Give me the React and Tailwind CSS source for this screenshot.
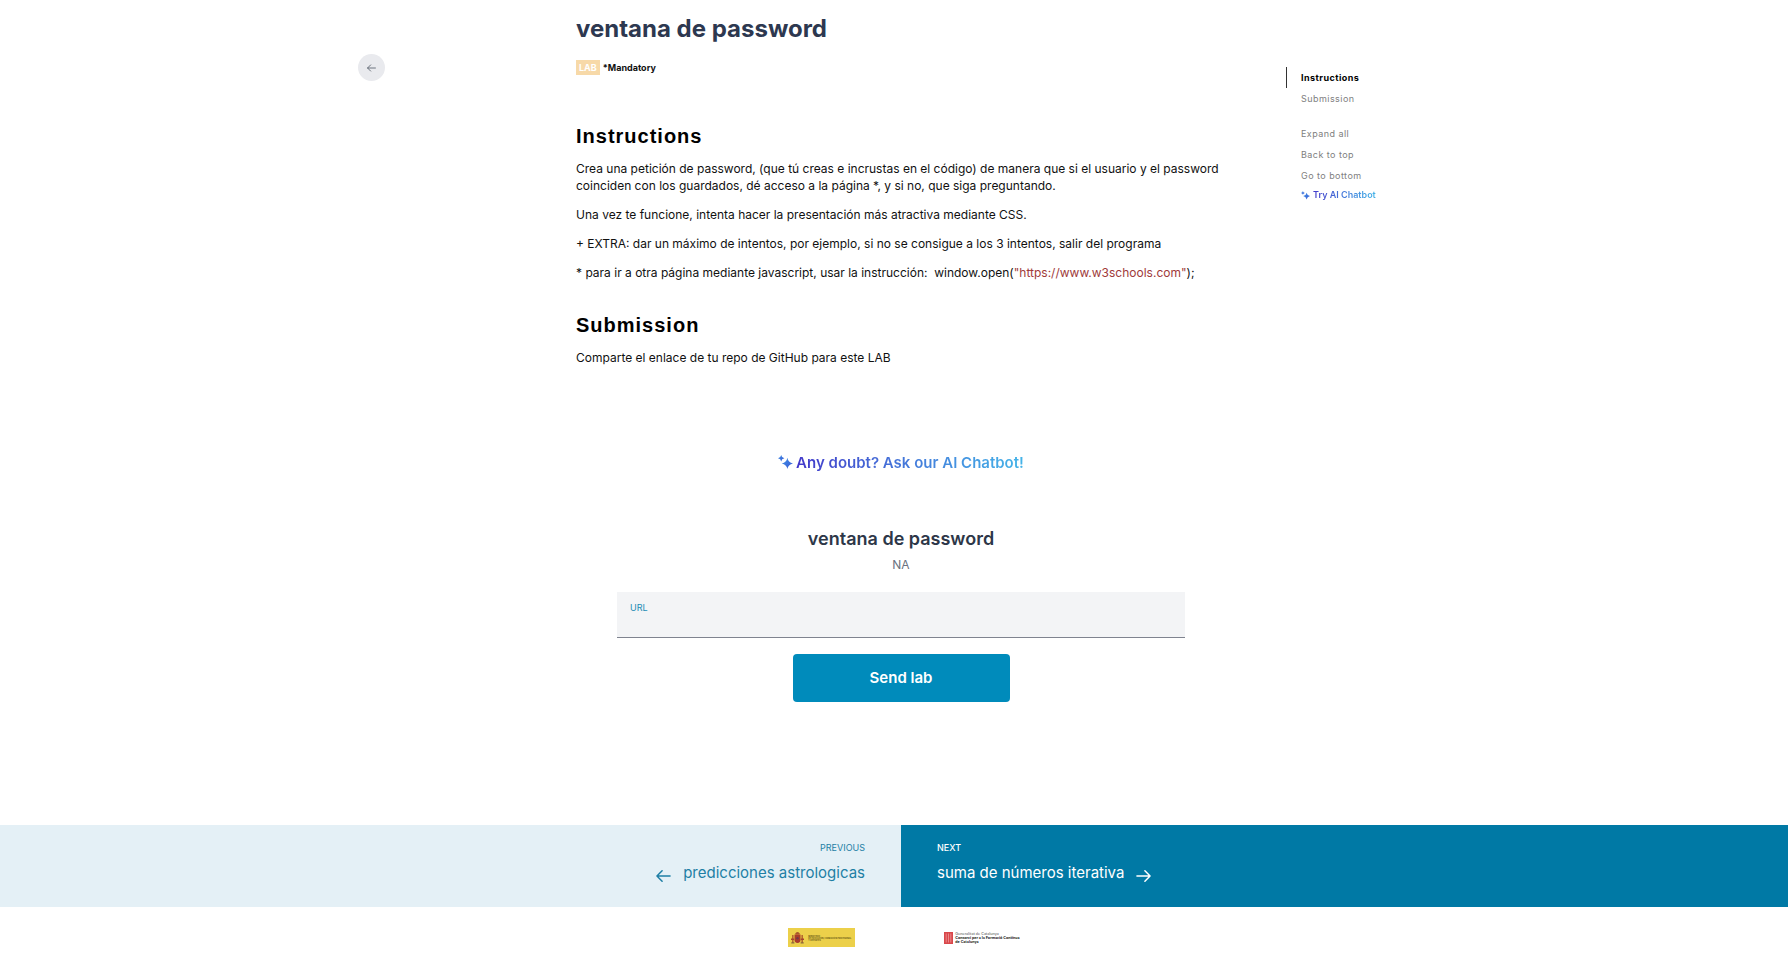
import React from "react";

function Sparkles({ className, id }) {
  return (
    <svg viewBox="0 0 16 16" className={className} aria-hidden="true">
      <defs>
        <linearGradient id={id} x1="0" y1="0" x2="1" y2="1">
          <stop offset="0" stopColor="#3f93e6" />
          <stop offset="1" stopColor="#3a56d4" />
        </linearGradient>
      </defs>
      <g fill={`url(#${id})`}>
        <path d="M10 3 Q10.8 8 16 9 Q10.8 10 10 15 Q9.2 10 4 9 Q9.2 8 10 3Z" />
        <path d="M3.4 0 Q3.8 2.8 6.8 3.4 Q3.8 4 3.4 6.8 Q3 4 0 3.4 Q3 2.8 3.4 0Z" />
      </g>
    </svg>
  );
}

function Arrow({ className, right }) {
  return (
    <svg viewBox="0 0 16 14" className={className} fill="none" stroke="currentColor" strokeWidth="1.6" strokeLinecap="round" strokeLinejoin="round" aria-hidden="true">
      {right ? <path d="M1 7H15M9.5 1.5L15 7L9.5 12.5" /> : <path d="M15 7H1M6.5 1.5L1 7L6.5 12.5" />}
    </svg>
  );
}

function SpainLogo() {
  return (
    <div className="flex h-[19px] w-[67px] items-center gap-1 bg-[#ecd04a] pl-[3px]">
      <svg viewBox="0 0 13 13" className="size-[13px] shrink-0" aria-hidden="true">
        <path d="M4.5 2.2Q6.5-.4 8.5 2.2V3.5H4.5Z" fill="#a8552c" />
        <path d="M3.5 3.5H9.5V9Q9.5 11.5 6.5 12Q3.5 11.5 3.5 9Z" fill="#a93a2b" />
        <path d="M1 4H2.6V12H1ZM10.4 4H12V12H10.4Z" fill="#b5692f" />
        <path d="M0 7.5H3.2V9H0ZM9.8 7.5H13V9H9.8Z" fill="#a5432d" />
        <path d="M.3 11.3H3.4V12.4H.3ZM9.6 11.3H12.7V12.4H9.6Z" fill="#8a6a3c" />
        <circle cx="6.5" cy="7.3" r="1.2" fill="#6f3a48" />
      </svg>
      <p className="whitespace-nowrap text-[2px] font-semibold leading-[2px] text-[#5b4d10]">
        MINISTERIO
        <br />
        DE EDUCACIÓN, FORMACIÓN PROFESIONAL
        <br />Y DEPORTES
      </p>
    </div>
  );
}

function CatalunyaLogo() {
  return (
    <div className="flex items-center gap-[2px]">
      <svg viewBox="0 0 9 12" className="h-3 w-[9px] shrink-0" aria-hidden="true">
        <path d="M0 0H9V12H0Z" fill="#d9474b" />
        <path d="M2.2 1.5V10.5M4.5 1.5V10.5M6.8 1.5V10.5" stroke="#f0a5a5" strokeWidth=".7" />
      </svg>
      <p className="whitespace-nowrap font-['Lato',sans-serif] text-[4px] font-black leading-[4px] text-[#222]">
        <span className="font-normal text-[#555]">Generalitat de Catalunya</span>
        <br />
        Consorci per a la Formació Contínua
        <br />
        de Catalunya
      </p>
    </div>
  );
}

const gradientText = "bg-linear-to-r from-[#4338ca] to-[#45b4e8] bg-clip-text text-transparent";

export default function App() {
  return (
    <div className="min-h-screen bg-white font-['Inter',sans-serif] text-[#111]">
      <div className="grid grid-cols-[1fr_minmax(0,650px)_1fr] pl-[14px]">
        <div className="flex justify-end pr-[191px] pt-[54px]">
          <button type="button" aria-label="Back" className="flex size-[27px] items-center justify-center rounded-full bg-[#e9eaee] text-[#5f6672]">
            <Arrow className="h-2 w-[9px]" />
          </button>
        </div>

        <main>
          <h1 className="pt-[11px] text-[24px] font-bold leading-9 text-[#2d3850]">ventana de password</h1>
          <div className="mt-[13px] flex h-[15px] items-center gap-[3px] text-[9px] font-bold">
            <span className="bg-[#f7d9a8] px-[3px] leading-[15px] text-white">LAB</span>
            <span>*Mandatory</span>
          </div>

          <section id="instructions" className="mt-[47px] text-[12px] leading-[17px]">
            <h2 className="font-['Liberation_Sans',sans-serif] text-[20px] font-bold leading-7 tracking-wider text-black">Instructions</h2>
            <div className="mt-[10px] space-y-3">
              <p>
                Crea una petición de password, (que tú creas e incrustas en el código) de manera que si el usuario y el password
                coinciden con los guardados, dé acceso a la página *, y si no, que siga preguntando.
              </p>
              <p>Una vez te funcione, intenta hacer la presentación más atractiva mediante CSS.</p>
              <p>+ EXTRA: dar un máximo de intentos, por ejemplo, si no se consigue a los 3 intentos, salir del programa</p>
              <p>
                * para ir a otra página mediante javascript, usar la instrucción:&nbsp; window.open(
                <span className="text-[#a03a3a]">"https://www.w3schools.com"</span>);
              </p>
            </div>
          </section>

          <section id="submission" className="mt-[30px] text-[12px] leading-[17px]">
            <h2 className="font-['Liberation_Sans',sans-serif] text-[20px] font-bold leading-7 tracking-wider text-black">Submission</h2>
            <p className="mt-[10px]">Comparte el enlace de tu repo de GitHub para este LAB</p>
          </section>

          <div className="mt-[85px] flex justify-center">
            <button type="button" className="flex items-center gap-[3px] text-[15px] font-semibold leading-6">
              <Sparkles className="mb-[2px] size-[15px]" id="spark-main" />
              <span className={gradientText}>Any doubt? Ask our AI Chatbot!</span>
            </button>
          </div>

          <form className="mx-[41px] mt-[50px] flex flex-col items-center" onSubmit={(e) => e.preventDefault()}>
            <h2 className="text-[18px] font-semibold leading-7 text-[#2d3748]">ventana de password</h2>
            <p className="mt-1 text-[12px] leading-4 text-[#6b7280]">NA</p>
            <div className="mt-[19px] flex h-[46px] w-full flex-col border-b border-[#7f838f] bg-[#f3f4f6] px-[13px] pt-2">
              <label htmlFor="lab-url" className="text-[9px] leading-4 text-[#1c8db5]">URL</label>
              <input id="lab-url" type="url" className="h-5 w-full bg-transparent text-[12px] outline-none" />
            </div>
            <button type="submit" className="mt-4 h-12 w-[217px] rounded-[4px] bg-[#008bbb] text-[15px] font-semibold text-white">Send lab</button>
          </form>
        </main>

        <aside className="pl-[60px] pt-[67px] text-[9px] leading-[21px] text-[#808080]">
          <nav className="flex flex-col items-start tracking-wider">
            <a href="#instructions" className="border-l border-[#333] pl-[14px] font-bold text-black">Instructions</a>
            <a href="#submission" className="pl-[15px]">Submission</a>
          </nav>
          <div className="mt-[14px] flex flex-col items-start pl-[15px]">
            <button type="button" className="tracking-wider">Expand all</button>
            <button type="button" className="tracking-wider">Back to top</button>
            <button type="button" className="tracking-wider">Go to bottom</button>
            <button type="button" className="flex items-center gap-[3px] font-semibold leading-[18px]">
              <Sparkles className="size-[9px]" id="spark-side" />
              <span className={gradientText}>Try AI Chatbot</span>
            </button>
          </div>
        </aside>
      </div>

      <nav className="mt-[123px] grid h-[82px] grid-cols-[calc(50%+7px)_1fr] text-[15px] leading-6">
        <a href="#previous" className="flex flex-col items-end bg-[#e4f0f6] pr-9 pt-[15px] text-[#1e7fa5]">
          <span className="text-[9px] leading-4">PREVIOUS</span>
          <span className="mt-[5px] flex gap-3">
            <Arrow className="mt-2 h-[14px] w-[15px]" />
            predicciones astrologicas
          </span>
        </a>
        <a href="#next" className="flex flex-col items-start bg-[#0079a5] pl-9 pt-[15px] text-white">
          <span className="text-[9px] font-medium leading-4">NEXT</span>
          <span className="mt-[5px] flex gap-3">
            suma de números iterativa
            <Arrow className="mt-2 h-[14px] w-[15px]" right />
          </span>
        </a>
      </nav>

      <footer className="mt-[21px] flex items-center justify-center gap-[89px] pl-5">
        <SpainLogo />
        <CatalunyaLogo />
      </footer>
    </div>
  );
}
